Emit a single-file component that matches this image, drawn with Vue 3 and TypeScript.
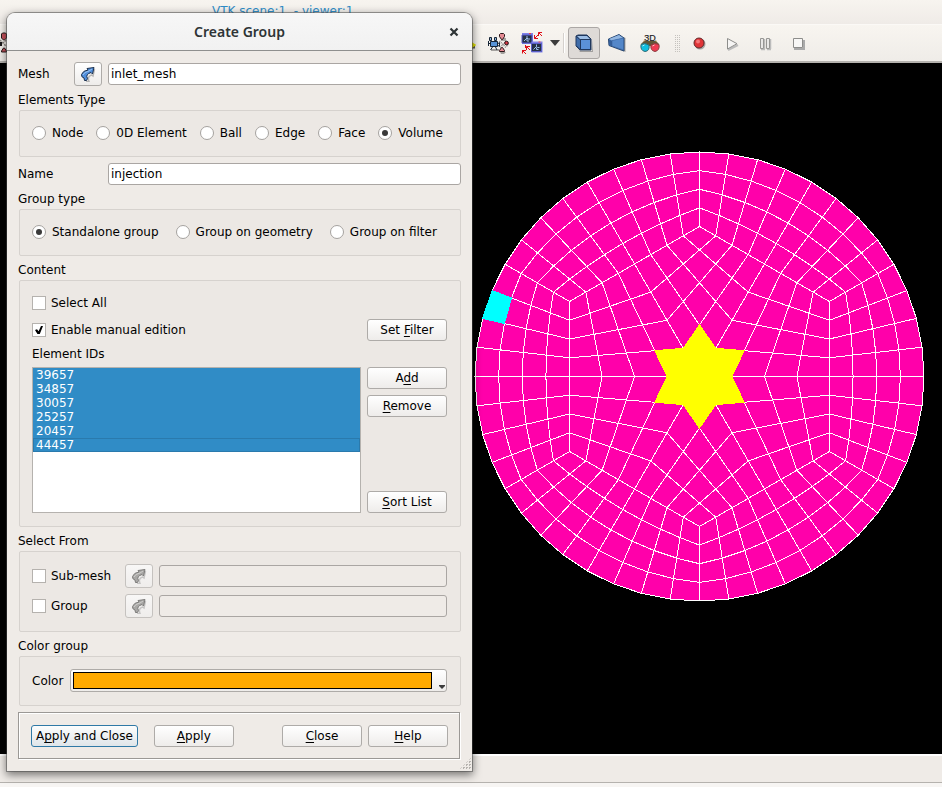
<script setup lang="ts">
import { ref } from 'vue'

type Point = [number, number]

const elementTypes = ['Node', '0D Element', 'Ball', 'Edge', 'Face', 'Volume']
const groupTypes = ['Standalone group', 'Group on geometry', 'Group on filter']
const elementIds = ['39657', '34857', '30057', '25257', '20457', '44457']

const meshName = ref('inlet_mesh')
const groupName = ref('injection')
const elementType = ref('Volume')
const groupType = ref('Standalone group')
const selectAll = ref(false)
const manualEdition = ref(true)
const selectedIds = ref<string[]>([...elementIds])
const sources = ref([
  { label: 'Sub-mesh', enabled: false, value: '' },
  { label: 'Group', enabled: false, value: '' },
])

// Disc mesh: six 4x4 kites fill a hexagon, four layers join the hexagon to the circle.
const RADIUS = 224.5
const CORNER = 150
const MIDDLE = CORNER * Math.cos(Math.PI / 6)
const DIVISIONS = 4

function polar(radius: number, degrees: number): Point {
  const a = (degrees * Math.PI) / 180
  return [radius * Math.cos(a), -radius * Math.sin(a)]
}

function mix(a: Point, b: Point, t: number): Point {
  return [a[0] + (b[0] - a[0]) * t, a[1] + (b[1] - a[1]) * t]
}

function toPoints(points: Point[]): string {
  return points.map(([x, y]) => `${x.toFixed(2)},${y.toFixed(2)}`).join(' ')
}

function kiteNode(sector: number, u: number, v: number): Point {
  const m1 = polar(MIDDLE, sector * 60)
  const c = polar(CORNER, sector * 60 + 30)
  const m2 = polar(MIDDLE, sector * 60 + 60)
  return mix(mix([0, 0], m1, u), mix(m2, c, u), v)
}

function ringNode(step: number, layer: number): Point {
  const sector = Math.floor(step / 8)
  const k = step % 8
  const m1 = polar(MIDDLE, sector * 60)
  const c = polar(CORNER, sector * 60 + 30)
  const m2 = polar(MIDDLE, sector * 60 + 60)
  const inner = k <= 4 ? mix(m1, c, k / 4) : mix(c, m2, (k - 4) / 4)
  return mix(inner, polar(RADIUS, step * 7.5), layer / DIVISIONS)
}

const steps = Array.from({ length: 48 }, (_, i) => i)
const quarters = Array.from({ length: DIVISIONS + 1 }, (_, i) => i)

const kiteLines: string[] = []
for (let s = 0; s < 6; s++) {
  for (let i = 0; i < DIVISIONS; i++) {
    kiteLines.push(toPoints(quarters.map((q) => kiteNode(s, i / 4, q / 4))))
    kiteLines.push(toPoints(quarters.map((q) => kiteNode(s, q / 4, i / 4))))
  }
}
const rings = quarters.map((l) => toPoints(steps.map((k) => ringNode(k, l))))
const spokes = steps.map((k) => toPoints([ringNode(k, 0), ringNode(k, DIVISIONS)]))
const disc = toPoints(steps.map((k) => ringNode(k, DIVISIONS)))
const star = toPoints(
  [0, 1, 2, 3, 4, 5].flatMap((s) => [kiteNode(s, 0.25, 0), kiteNode(s, 0.25, 0.25)]),
)
const picked = toPoints([ringNode(21, 3), ringNode(21, 4), ringNode(22, 4), ringNode(22, 3)])
</script>

<template>
  <div class="desktop">
    <header class="scene-title">VTK scene:1&nbsp; - viewer:1</header>

    <div class="toolbar" role="toolbar" aria-label="View operations">
      <button class="tool first" type="button" aria-label="Fit selection">
        <svg width="22" height="22" viewBox="0 0 22 22">
          <path d="M15.500 2l1-1h3l1 1v4l-2 2h-1l-2-2zM15.500 19l2-3h1l2 3v1h-5z" fill="#c9525c" stroke="#241a1a" />
          <path d="M14 8l6 6M20 8l-6 6" fill="none" stroke="#8d8986" stroke-width="1.500" stroke-dasharray="2 1" />
          <path d="M15 10v4" stroke="#1c1c1c" stroke-width="2" />
        </svg>
      </button>
      <button class="tool axes" type="button" aria-label="Axes">
        <svg width="22" height="22" viewBox="0 0 22 22">
          <path d="M12 15h9" stroke="#555" stroke-width="3" />
          <path d="M11 13h9M18 11l3 2-3 2z" fill="#e8e800" stroke="#e2e200" stroke-width="1.500" />
        </svg>
      </button>
      <button class="tool" type="button" aria-label="Memorize view">
        <svg width="22" height="22" viewBox="0 0 22 22">
          <g fill="#111" opacity=".35">
            <path d="M4 17h8v2H4zM14 6h5v3h-5zM18 12l3-2 1 2-2 3zM13 20h6l-2 2h-3z" />
          </g>
          <path d="M12.500 9l7 7M19.500 9l-7 7" stroke="#8d8986" stroke-width="1.500" stroke-dasharray="1 1" fill="none" />
          <g stroke="#172536">
            <path d="M2.500 5.500h2v3h-2zM7.500 5.500h2v3h-2z" fill="#8fb6dc" />
            <path d="M3.500 9.500h7v5h-7z" fill="#5994d6" />
            <path d="M1.500 9v5M1.500 11.500h2M10.500 12l2-1.500v4l-2-1.500M5.500 15l-2 3M8.500 15l1.500 3" fill="none" />
          </g>
          <g fill="#e58b93" stroke="#2a1518">
            <path d="M12.500 2.500l1-1h3l1 1v2l-2 3h-1l-2-3z" />
            <path d="M12.500 18.500l2-3h1l2 3v1h-5z" />
          </g>
          <circle cx="19.500" cy="11" r="1.800" fill="#d93a46" stroke="#2a1518" />
        </svg>
      </button>
      <button class="tool sync" type="button" aria-label="Synchronize view">
        <svg width="22" height="22" viewBox="0 0 22 22">
          <g>
            <path d="M1 1h11v11H1z" fill="#7e82e8" />
            <path d="M1 3h10v8H1z" fill="#263145" stroke="#5a5ec9" />
            <path d="M8 1h2v1H8z" fill="#ff4040" />
            <path d="M3 9l3-3V4M6 6l1 1h2M6 7v2h2" fill="none" stroke="#9cc0ea" />
          </g>
          <g transform="translate(9.500 8.500)">
            <path d="M1 1h11v11H1z" fill="#7e82e8" />
            <path d="M1 3h10v8H1z" fill="#263145" stroke="#5a5ec9" />
            <path d="M8 1h2v1H8z" fill="#ff4040" />
            <path d="M3 9l3-3V4M6 6l1 1h2M6 7v2h2" fill="none" stroke="#9cc0ea" />
          </g>
          <g fill="none" stroke="#e00d16">
            <path d="M13.500 3v3.500H17M13.500 6.500L17 3M17.500 4V.500H21M17.500 .500L21 4" />
            <path d="M4.500 16v-3M1.500 18v3.500M1.500 18.500H5M1.500 18.500L5 22M5.500 18v-3.500H9M5.500 14.500L9 18" />
          </g>
        </svg>
      </button>
      <button class="drop" type="button" aria-label="More synchronization options">
        <svg width="10" height="6" viewBox="0 0 10 6"><path d="M0 0h10L5 6z" fill="#3c3c3c" /></svg>
      </button>
      <span class="separator"></span>
      <button class="tool pressed" type="button" aria-label="Parallel mode" aria-pressed="true">
        <svg width="20" height="20" viewBox="0 0 20 20">
          <path d="M4 16l2 2h12V7l1 12H6z" fill="#777" opacity=".6" />
          <path d="M2 3l2-1h9l4 4v11H6l-4-4z" fill="#20385e" stroke="#20385e" />
          <path d="M3 3h10l3 3H6z" fill="#9bbde6" />
          <path d="M2.500 4L6 7v9l-3.500-3.500z" fill="#3e6ba9" />
          <path d="M6.500 6.500h10v10h-10z" fill="#5b91d8" stroke="#20385e" />
        </svg>
      </button>
      <button class="tool" type="button" aria-label="Perspective mode">
        <svg width="20" height="20" viewBox="0 0 20 20">
          <path d="M4 14l13 4V4l1.500 1v14z" fill="#777" opacity=".6" />
          <path d="M1.500 6L12 1.500l5 3.500v13L2 12.500z" fill="#4779bd" stroke="#26456f" />
          <path d="M2 6l10-4 4 3L5 7.500z" fill="#93b7e2" />
          <path d="M2 6.500L5 8v5l-3-1z" fill="#345f9b" />
          <path d="M5 7.500L16.500 5v12L5 13z" fill="#5487c9" stroke="#355e96" stroke-width=".5" />
        </svg>
      </button>
      <button class="tool" type="button" aria-label="Stereo mode">
        <svg width="22" height="22" viewBox="0 0 22 22">
          <text x="11" y="9" class="stereo-text">3D</text>
          <path d="M2 12l3-3h12l3 3-1 2H3z" fill="#625536" />
          <path d="M4 9.500l2-1M18 9.500l-2-1" stroke="#b7a374" />
          <path d="M2 12.500q4-2 8 .5 1 6-4 6.500-5-1-4-7z" fill="#10bfe0" stroke="#2f6b75" />
          <path d="M12 13q4-2.500 8-.5 1 6-4 7-5-1-4-6.500z" fill="#ef3b52" stroke="#8a3b3f" />
          <path d="M3.500 14l2-1M13.500 14l2-1" stroke="#fff" opacity=".7" />
        </svg>
      </button>
      <span class="handle"></span>
      <button class="tool" type="button" aria-label="Start recording">
        <svg width="16" height="16" viewBox="0 0 16 16">
          <circle cx="9" cy="9" r="5.500" fill="#777" opacity=".6" />
          <circle cx="8" cy="8" r="5" fill="#e03538" stroke="#64292b" />
          <circle cx="7" cy="6.500" r="2" fill="#f5787a" />
        </svg>
      </button>
      <button class="tool" type="button" aria-label="Play recording">
        <svg width="16" height="16" viewBox="0 0 16 16">
          <path d="M4 15L14 10" stroke="#bbb" stroke-width="2" />
          <path d="M3.500 3.500v10.500L13 8.700z" fill="#f6f5f4" stroke="#8d8d8b" />
        </svg>
      </button>
      <button class="tool" type="button" aria-label="Pause recording">
        <svg width="16" height="16" viewBox="0 0 16 16">
          <path d="M4 14.500h4M10 14.500h4M7.500 4v10M13.500 4v10" stroke="#bbb" stroke-width="1.500" />
          <path d="M3.500 3.500h3v10h-3zM9.500 3.500h3v10h-3z" fill="#e9e8e7" stroke="#979795" />
        </svg>
      </button>
      <button class="tool" type="button" aria-label="Stop recording">
        <svg width="16" height="16" viewBox="0 0 16 16">
          <path d="M4 14h10V5" stroke="#aaa" stroke-width="2" fill="none" />
          <path d="M3.500 3.500h9v9h-9z" fill="#f8f7f6" stroke="#8d8d8b" />
        </svg>
      </button>
    </div>

    <main class="viewport">
      <svg class="mesh" width="450" height="450" viewBox="-225.500 -225.500 450 450" role="img" aria-label="Mesh">
        <polygon :points="disc" fill="#ff00aa" />
        <g class="edges">
          <polyline v-for="(line, i) in kiteLines" :key="`k${i}`" :points="line" />
          <polygon v-for="(ring, i) in rings" :key="`r${i}`" :points="ring" />
          <polyline v-for="(spoke, i) in spokes" :key="`s${i}`" :points="spoke" />
        </g>
        <polygon :points="star" class="group-cell" />
        <polygon :points="picked" class="picked-cell" />
      </svg>
    </main>

    <footer class="statusbar"></footer>

    <section class="dialog" role="dialog" aria-labelledby="dialog-title">
      <div class="titlebar">
        <h1 id="dialog-title">Create Group</h1>
        <button class="close" type="button" aria-label="Close window">
          <svg width="10" height="10" viewBox="0 0 10 10">
            <path d="M1.500 1.500l7 7M8.500 1.500l-7 7" stroke="#2e3436" stroke-width="2.200" />
          </svg>
        </button>
      </div>

      <form class="body" @submit.prevent>
        <div class="field-row">
          <label for="mesh">Mesh</label>
          <button class="pick" type="button" aria-label="Pick mesh">
            <svg width="16" height="16" viewBox="0 0 16 16">
              <path d="M6 15.500h3q-2-5 2.500-6.500l1.500 1 1.500-7" fill="none" stroke="#777" stroke-width="1.500" opacity=".5" />
              <path d="M4.500 14.500L4 12Q1 11 1.500 8.500 3 4.500 8 4L7 2.500l7-1L12.500 8 11 6.500Q5 8.500 7.500 12.500L6.500 14.500z" fill="#4f8edb" stroke="#1b2f4c" />
              <path d="M3 9q1-3 6-4l3-2" fill="none" stroke="#9cc4f2" />
            </svg>
          </button>
          <input id="mesh" v-model="meshName" type="text" />
        </div>

        <fieldset>
          <legend>Elements Type</legend>
          <div class="panel radios">
            <label v-for="item in elementTypes" :key="item">
              <input v-model="elementType" type="radio" name="element-type" :value="item" />{{ item }}
            </label>
          </div>
        </fieldset>

        <div class="field-row">
          <label for="name">Name</label>
          <input id="name" v-model="groupName" class="wide" type="text" />
        </div>

        <fieldset>
          <legend>Group type</legend>
          <div class="panel radios spread">
            <label v-for="item in groupTypes" :key="item">
              <input v-model="groupType" type="radio" name="group-type" :value="item" />{{ item }}
            </label>
          </div>
        </fieldset>

        <fieldset>
          <legend>Content</legend>
          <div class="panel content">
            <label class="check all"><input v-model="selectAll" type="checkbox" />Select All</label>
            <label class="check"><input v-model="manualEdition" type="checkbox" />Enable manual edition</label>
            <button class="push" type="button">Set <u>F</u>ilter</button>
            <label class="ids-label" for="ids">Element IDs</label>
            <select id="ids" v-model="selectedIds" class="ids" multiple size="6">
              <option v-for="id in elementIds" :key="id" :value="id">{{ id }}</option>
            </select>
            <div class="list-actions">
              <button class="push" type="button">A<u>d</u>d</button>
              <button class="push" type="button"><u>R</u>emove</button>
              <button class="push last" type="button"><u>S</u>ort List</button>
            </div>
          </div>
        </fieldset>

        <fieldset>
          <legend>Select From</legend>
          <div class="panel sources">
            <template v-for="source in sources" :key="source.label">
              <label class="check"><input v-model="source.enabled" type="checkbox" />{{ source.label }}</label>
              <button class="pick off" type="button" disabled :aria-label="`Pick ${source.label}`">
                <svg width="16" height="16" viewBox="0 0 16 16">
                  <path d="M6 15.500h3q-2-5 2.500-6.500l1.500 1 1.500-7" fill="none" stroke="#999" stroke-width="1.500" opacity=".5" />
                  <path d="M4.500 14.500L4 12Q1 11 1.500 8.500 3 4.500 8 4L7 2.500l7-1L12.500 8 11 6.500Q5 8.500 7.500 12.500L6.500 14.500z" fill="#a9a8a6" stroke="#7d7c7a" />
                  <path d="M3 9q1-3 6-4l3-2" fill="none" stroke="#cfcecc" />
                </svg>
              </button>
              <input v-model="source.value" type="text" disabled :aria-label="source.label" />
            </template>
          </div>
        </fieldset>

        <fieldset>
          <legend>Color group</legend>
          <div class="panel color-row">
            <span id="color-label">Color</span>
            <button class="color" type="button" aria-labelledby="color-label">
              <span class="swatch"></span>
              <svg width="6" height="4" viewBox="0 0 6 4"><path d="M0 0h6v1L3 4 0 1z" fill="#3c3c3c" /></svg>
            </button>
          </div>
        </fieldset>

        <div class="actions">
          <button class="push default" type="submit">A<u>p</u>ply and Close</button>
          <button class="push" type="button"><u>A</u>pply</button>
          <span class="closing">
            <button class="push" type="button"><u>C</u>lose</button>
            <button class="push" type="button"><u>H</u>elp</button>
          </span>
        </div>
      </form>
      <span class="grip"></span>
    </section>
  </div>
</template>

<style>
body {
  margin: 0;
}
</style>

<style scoped>
.desktop {
  position: relative;
  display: grid;
  grid-template-rows: 24px 39px 1fr 33px;
  min-height: 100vh;
  overflow: hidden;
  background: #efebe7;
  color: #000;
  font: 12px/16px "DejaVu Sans", sans-serif;
}
.desktop *,
.desktop *::after {
  box-sizing: border-box;
}
button,
input,
select {
  margin: 0;
  font: inherit;
  color: inherit;
}

.scene-title {
  padding: 3px 0 0 212px;
  background: linear-gradient(#f7f4ef, #efebe7);
  color: #308cc6;
  white-space: nowrap;
}
.toolbar {
  display: flex;
  align-items: center;
  gap: 1px;
  border-top: 1px solid #fbf9f6;
  border-bottom: 2px solid #b5b2ae;
  background: linear-gradient(#f8f5f0, #efece8);
}
.tool {
  display: grid;
  flex: none;
  place-items: center;
  width: 32px;
  height: 32px;
  padding: 0;
  border: 1px solid transparent;
  border-radius: 3px;
  background: none;
}
.tool.first {
  margin-left: -19px;
}
.tool.axes {
  margin-left: 435px;
}
.tool.sync {
  margin-left: 1px;
}
.tool.pressed {
  border-color: #aba7a5;
  background: #dedad7;
}
.drop {
  display: grid;
  place-items: center;
  width: 12px;
  height: 32px;
  padding: 0;
  border: 0;
  background: none;
}
.separator {
  width: 2px;
  height: 20px;
  margin: 0 2px 0 1px;
  border-left: 1px solid #d5d1cd;
  border-right: 1px solid #fff;
}
.handle {
  width: 5px;
  height: 17px;
  margin: 0 2px 0 8px;
  background: conic-gradient(#c5c2be 25%, transparent 0) -1px 0 / 2px 2px;
}
.stereo-text {
  font: 9px "Liberation Sans", sans-serif;
  text-anchor: middle;
  fill: #222;
  stroke: #222;
  stroke-width: .2px;
}

.viewport {
  display: flex;
  justify-content: flex-end;
  align-items: flex-start;
  padding: 88px 18px 0 0;
  background: #000;
}
.mesh {
  display: block;
  shape-rendering: crispEdges;
}
.edges {
  fill: none;
  stroke: #fff;
  stroke-width: 1;
}
.group-cell {
  fill: #ff0;
  stroke: #ff0;
}
.picked-cell {
  fill: #0ff;
  stroke: #0ff;
}
.statusbar {
  border-top: 2px solid #fff;
  background: linear-gradient(#efebe7 26px, #b5b2ae 26px, #b5b2ae 27px, #f7f5f3 27px);
}

.dialog {
  position: absolute;
  top: 13px;
  left: 7px;
  width: 465px;
  border-radius: 8px 8px 0 0;
  background: #efebe7;
  box-shadow: 0 0 0 1px rgba(70, 70, 70, .5), 0 3px 8px 1px rgba(0, 0, 0, .5);
}
.titlebar {
  display: grid;
  grid-template-columns: 36px 1fr 36px;
  align-items: center;
  height: 38px;
  border-bottom: 1px solid #8f8f8e;
  border-radius: 8px 8px 0 0;
  background: linear-gradient(#f7f7f7, #f1f1f1);
}
.titlebar h1 {
  grid-column: 2;
  margin: 0;
  color: #2e3436;
  font: 600 14px/20px "Noto Sans", sans-serif;
  text-align: center;
}
.close {
  display: grid;
  place-items: center;
  height: 30px;
  padding: 0;
  border: 0;
  background: none;
}
.body {
  display: flex;
  flex-direction: column;
  gap: 6px;
  padding: 11px 11px 12px;
}
.field-row {
  display: grid;
  grid-template-columns: 50px 28px 1fr;
  column-gap: 6px;
  align-items: center;
}
.field-row .wide {
  grid-column: 3;
}
fieldset {
  min-width: 0;
  margin: 0;
  padding: 0;
  border: 0;
}
legend {
  height: 18px;
  padding: 0;
}
.panel {
  margin-left: 1px;
  padding: 12px 13px 13px 12px;
  border: 1px solid #d6d2ce;
  border-radius: 2px;
  background: #ece8e4;
}
.radios {
  display: flex;
  align-items: center;
  gap: 13px;
  height: 47px;
}
.radios.spread {
  gap: 17px;
}
.radios label,
.check {
  display: flex;
  align-items: center;
  gap: 6px;
  white-space: nowrap;
}
.check {
  gap: 5px;
}
input[type="text"] {
  width: 100%;
  min-width: 0;
  height: 22px;
  padding: 0 2px 1px;
  border: 1px solid #aaa6a3;
  border-radius: 3px;
  outline: 0;
  background: #fff;
}
input[type="text"]:disabled {
  background: #efebe7;
}
input[type="radio"],
input[type="checkbox"] {
  display: grid;
  flex: none;
  place-items: center;
  width: 14px;
  height: 14px;
  border: 1px solid #b5b2ae;
  background: #fff;
  appearance: none;
}
input[type="radio"] {
  border-radius: 50%;
  border-color: #a5a29f;
}
input[type="radio"]:checked::after {
  width: 6px;
  height: 6px;
  border-radius: 50%;
  background: #3a3a3a;
  content: "";
}
input[type="checkbox"]:checked::after {
  width: 8px;
  height: 8px;
  background: #000;
  clip-path: polygon(0 50%, 25% 40%, 45% 65%, 75% 0, 100% 0, 60% 100%, 30% 100%);
  content: "";
}
.push,
.pick,
.color {
  border: 1px solid #aeaba8;
  border-radius: 3px;
  background: linear-gradient(#fff, #eeecea);
}
.push {
  min-width: 80px;
  height: 22px;
  padding: 0 4px;
  line-height: 18px;
  white-space: nowrap;
}
.push.default {
  border-color: #2f79a6;
  background: linear-gradient(#fcfdfd, #dfe5e9);
}
u {
  text-decoration-thickness: 1px;
  text-underline-offset: 2px;
  text-decoration-skip-ink: none;
}
.pick {
  display: grid;
  place-items: center;
  width: 28px;
  height: 24px;
  padding: 0;
}
.pick.off {
  border-color: #c5c2bf;
  background: linear-gradient(#f8f7f6, #efedeb);
}

.content {
  display: grid;
  grid-template-columns: 1fr 80px;
  grid-template-rows: 22px 5px 22px 26px 146px;
  column-gap: 6px;
  padding-top: 11px;
}
.content .all {
  grid-column: 1 / -1;
}
.content .all + .check,
.content > .push {
  grid-row: 3;
}
.ids-label {
  grid-row: 4;
  grid-column: 1 / -1;
  align-self: center;
}
.ids {
  grid-row: 5;
  width: 100%;
  height: 146px;
  padding: 0;
  border: 1px solid #b5b2ae;
  border-radius: 0;
  outline: 0;
  background: #fff;
  overflow: hidden;
}
.ids option {
  height: 14px;
  min-height: 14px;
  padding: 0 3px;
  line-height: 14px;
}
.ids option:checked {
  background: linear-gradient(#308cc6, #308cc6);
  color: #fff;
}
.ids option:last-child {
  box-shadow: inset 0 0 0 1px #2a7aad;
}
.list-actions {
  display: flex;
  grid-row: 5;
  flex-direction: column;
  gap: 6px;
}
.list-actions .last {
  margin-top: auto;
}
.sources {
  display: grid;
  grid-template-columns: 87px 28px 1fr;
  gap: 6px;
  align-items: center;
}
.color-row {
  display: flex;
  align-items: center;
  gap: 6px;
}
.color-row > span {
  min-width: 32px;
}
.color {
  display: flex;
  flex: 1;
  align-items: center;
  gap: 7px;
  height: 23px;
  padding: 2px 1px 2px 2px;
}
.color svg {
  align-self: flex-end;
}
.swatch {
  flex: 1;
  height: 17px;
  border: 1px solid #000;
  background: #ffaa00;
}
.actions {
  display: flex;
  gap: 16px;
  height: 47px;
  margin-right: 1px;
  padding: 12px 11px 12px 12px;
  border: 1px solid #9b9895;
  box-shadow: inset 1px 1px #fff, 1px 1px #fff;
}
.closing {
  display: flex;
  gap: 6px;
  margin-left: auto;
}
.grip {
  position: absolute;
  right: 1px;
  bottom: 1px;
  width: 12px;
  height: 12px;
  background: conic-gradient(#b5b2ae 25%, transparent 0) 0 0 / 3px 3px;
  clip-path: polygon(100% 0, 100% 100%, 0 100%);
}
</style>
